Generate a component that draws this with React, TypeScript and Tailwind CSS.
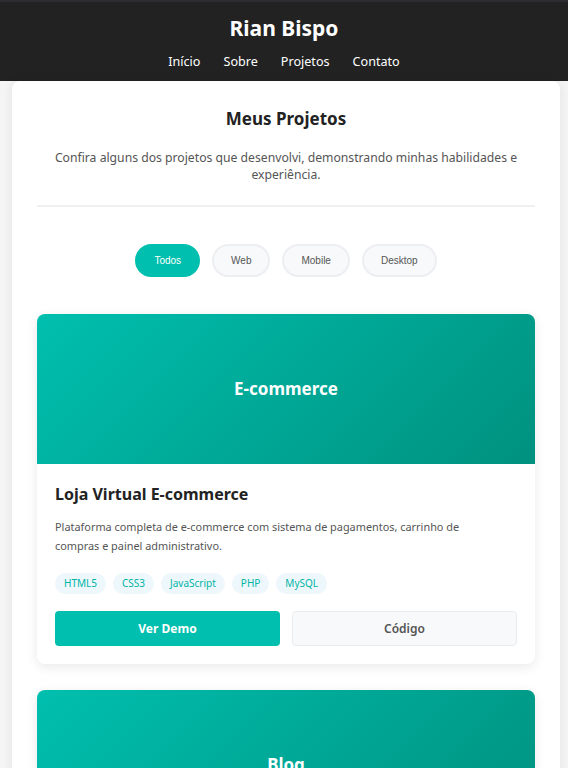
const filters = ['Todos', 'Web', 'Mobile', 'Desktop']

const projects = [
	{
		label: 'E-commerce',
		title: 'Loja Virtual E-commerce',
		text: 'Plataforma completa de e-commerce com sistema de pagamentos, carrinho de compras e painel administrativo.',
		tags: ['HTML5', 'CSS3', 'JavaScript', 'PHP', 'MySQL'],
	},
	{
		label: 'Blog',
		title: 'Blog Pessoal',
		text: 'Blog responsivo com sistema de gerenciamento de conteúdo e comentários.',
		tags: ['HTML5', 'CSS3', 'JavaScript'],
	},
]

const App = () => {
	return (
		<div className="min-h-screen bg-[#f5f5f5] font-['Noto_Sans',sans-serif] text-[#333]">
			<header className="bg-[#222] border-t-2 border-[#2c2c31] pt-[12px] pb-[9px] text-center text-white">
				<h1 className="text-[21px] font-bold leading-[28px]">Rian Bispo</h1>
				<nav className="mt-[10px] flex justify-center gap-[23px] text-[12.6px] leading-[20px]">
					<a href="#inicio">Início</a>
					<a href="#sobre">Sobre</a>
					<a href="#projetos">Projetos</a>
					<a href="#contato">Contato</a>
				</nav>
			</header>

			<main className="ml-[12px] mr-[8px] rounded-t-[8px] bg-white px-[25px] pt-[24px] pb-[20px] shadow-[0_0_12px_rgba(0,0,0,0.08)]">
				<section className="text-center">
					<h2 className="text-[17px] font-bold leading-[28px] text-[#222]">Meus Projetos</h2>
					<p className="mt-[16px] px-[10px] text-[12.2px] leading-[17px] text-[#555]">
						Confira alguns dos projetos que desenvolvi, demonstrando minhas habilidades e experiência.
					</p>
				</section>
				<hr className="mt-[22px] border-t-2 border-[#f0f0f0]" />

				<div className="mt-[37px] flex justify-center gap-[12px] font-['Liberation_Sans',Arial,sans-serif] text-[10px]">
					{filters.map((f, i) => (
						<button
							key={f}
							className={
								i === 0
									? 'h-[33px] rounded-full border-2 border-[#00bfae] bg-[#00bfae] px-[17px] text-white'
									: 'h-[33px] rounded-full border-2 border-[#eceef1] bg-[#f8f9fa] px-[17px] text-[#555]'
							}
						>
							{f}
						</button>
					))}
				</div>

				<div className="mt-[37px] flex flex-col gap-[26px]">
					{projects.map((p) => (
						<article key={p.title} className="overflow-hidden rounded-[8px] bg-white shadow-[0_3px_12px_rgba(0,0,0,0.09)]">
							<div className="flex h-[150px] items-center justify-center bg-[linear-gradient(135deg,#00bfae,#00917f)] text-[17px] font-bold text-white">
								{p.label}
							</div>
							<div className="px-[18px] pt-[18px] pb-[18px]">
								<h3 className="text-[16px] font-bold leading-[24px] text-[#222]">{p.title}</h3>
								<p className="mt-[11px] pr-[50px] text-[10.9px] leading-[19px] text-[#555]">{p.text}</p>
								<div className="mt-[18px] flex flex-wrap gap-[7px]">
									{p.tags.map((t) => (
										<span key={t} className="flex h-[21px] items-center rounded-full bg-[#eef7fc] px-[9px] text-[10px] text-[#00b5a4]">
											{t}
										</span>
									))}
								</div>
								<div className="mt-[17px] grid grid-cols-2 gap-[12px]">
									<button className="h-[35px] rounded-[4px] bg-[#00bfae] text-[12px] font-bold text-white">Ver Demo</button>
									<button className="h-[35px] rounded-[4px] border border-[#e9ecef] bg-[#f8f9fa] text-[12px] font-semibold text-[#555]">
										Código
									</button>
								</div>
							</div>
						</article>
					))}
				</div>
			</main>
		</div>
	)
}

export default App
